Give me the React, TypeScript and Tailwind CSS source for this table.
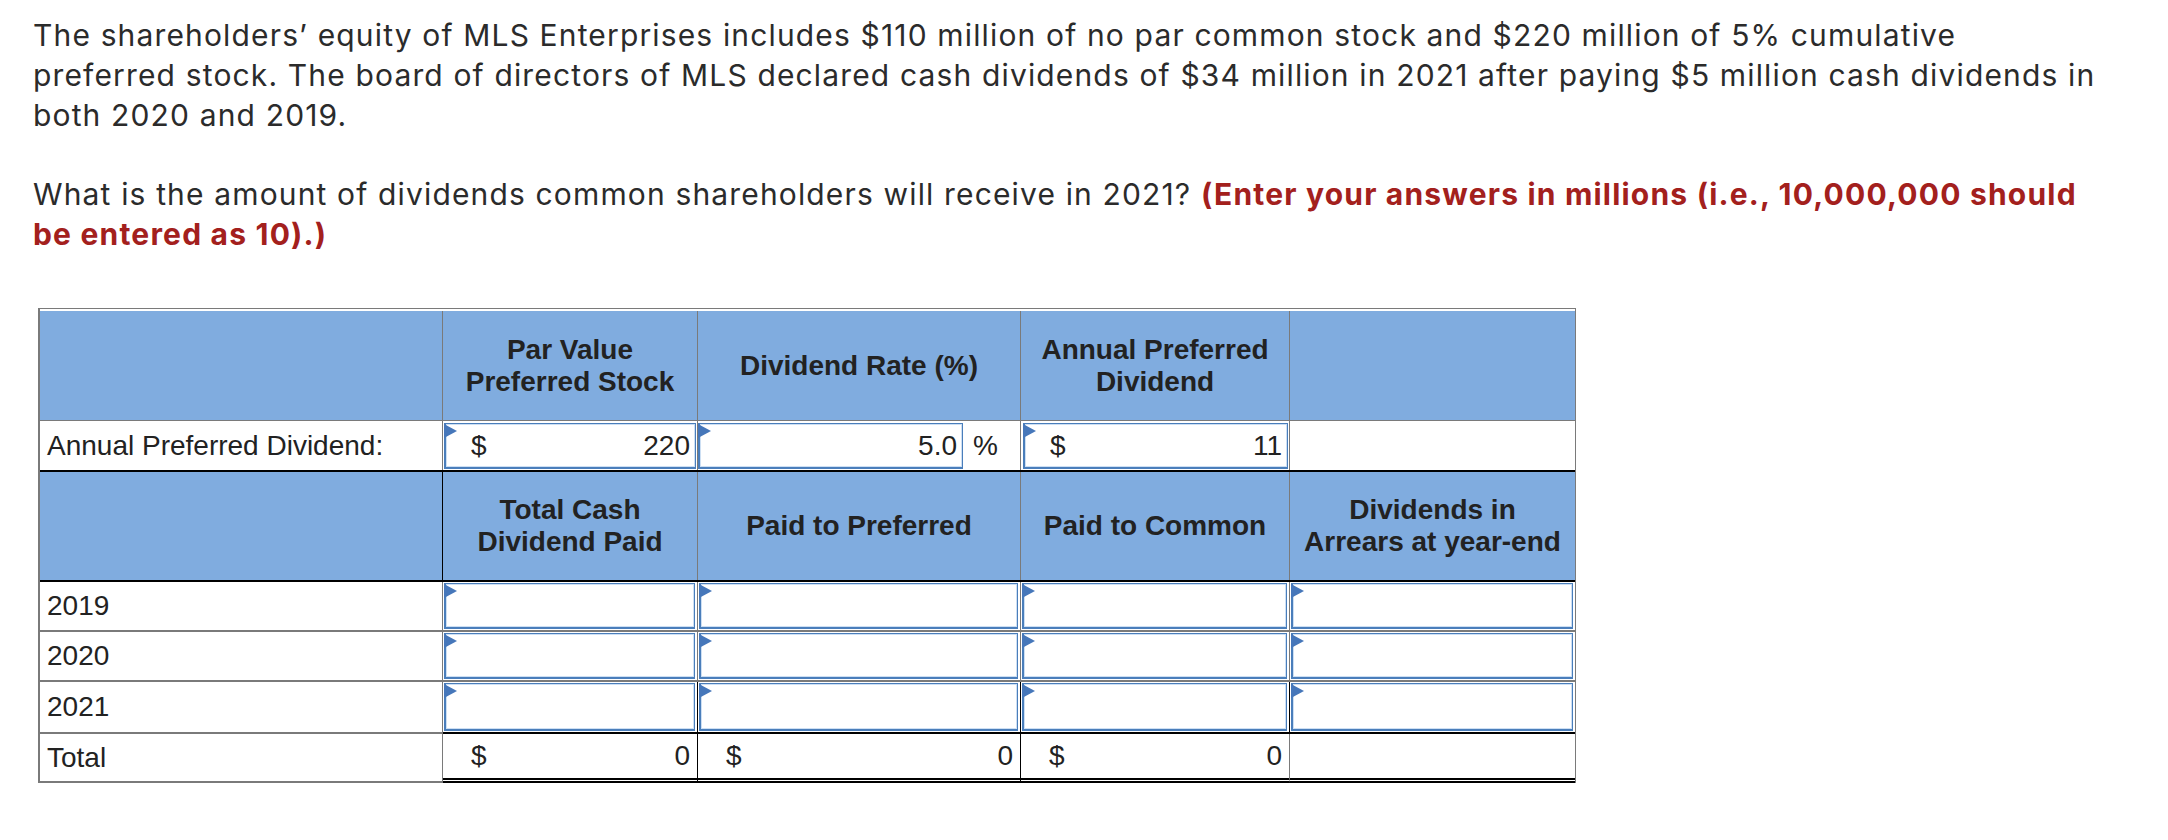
import type { ReactNode } from "react";

const gray = "border-[#7a7a7a]";

function Flag() {
  return (
    <svg
      className="absolute left-[-2px] top-0"
      width="13"
      height="14"
      viewBox="0 0 13 14"
    >
      <polygon points="0,0 13,7 0,14" fill="#4677ba" />
    </svg>
  );
}

// editable answer box with the little blue flag in the corner
function InputBox({
  left,
  right,
  className = "",
}: {
  left?: ReactNode;
  right?: ReactNode;
  className?: string;
}) {
  return (
    <div
      className={`relative flex h-full items-center justify-between border border-b-2 border-l-2 border-[#4a7ebb] bg-white pl-[25px] pr-[5px] shadow-[inset_0_0_0_1px_#cddff3] ${className}`}
    >
      <Flag />
      <span>{left}</span>
      <span>{right}</span>
    </div>
  );
}

function HeadCell({
  children,
  className = "",
}: {
  children?: ReactNode;
  className?: string;
}) {
  return (
    <div
      className={`flex items-center justify-center bg-[#80acdf] px-2 text-center font-bold leading-[32px] ${className}`}
    >
      <div>{children}</div>
    </div>
  );
}

export default function App() {
  const years = ["2019", "2020", "2021"];

  return (
    <div className="min-h-[840px] w-[2168px] bg-white text-[#222]">
      <div className="px-[33px] pt-[15px] font-['Inter',sans-serif] text-[30px] leading-[40px] tracking-[1.15px] text-[#2b2b2b]">
        <p className="w-[2110px]">
          The shareholders’ equity of MLS Enterprises includes $110 million of
          no par common stock and $220 million of 5% cumulative
          <br />
          preferred stock. The board of directors of MLS declared cash
          dividends of $34 million in 2021 after paying $5 million cash
          dividends in
          <br />
          both 2020 and 2019.
        </p>
        <p className="mt-[39px] w-[2110px]">
          What is the amount of dividends common shareholders will receive in
          2021?{" "}
          <strong className="font-bold tracking-[1.2px] text-[#a3201d]">
            (Enter your answers in millions (i.e., 10,000,000 should
            <br />
            be entered as 10).)
          </strong>
        </p>
      </div>

      <div
        className={`ml-[38px] mt-[54px] w-[1538px] border-l-2 border-r border-t ${gray} pt-[2px] font-['Liberation_Sans',Arial,sans-serif] text-[28px] leading-[32px]`}
      >
        {/* first header */}
        <div className="grid h-[110px] grid-cols-[403px_255px_323px_269px_285px]">
          <HeadCell className={`border-b border-r ${gray}`} />
          <HeadCell className={`border-b border-r ${gray}`}>
            Par Value
            <br />
            Preferred Stock
          </HeadCell>
          <HeadCell className={`border-b border-r ${gray}`}>
            Dividend Rate (%)
          </HeadCell>
          <HeadCell className={`border-b border-r ${gray}`}>
            Annual Preferred
            <br />
            Dividend
          </HeadCell>
          <HeadCell className={`border-b ${gray}`} />
        </div>

        {/* annual preferred dividend row */}
        <div className="grid h-[51px] grid-cols-[403px_255px_323px_269px_285px] border-b-2 border-black">
          <div className={`flex items-center border-r ${gray} pl-[7px]`}>
            Annual Preferred Dividend:
          </div>
          <div className={`border-r ${gray} pb-[1px] pl-[1px] pr-[1px] pt-[2px]`}>
            <InputBox left="$" right="220" />
          </div>
          <div className={`flex border-r ${gray} pb-[1px] pt-[2px]`}>
            <InputBox right="5.0" className="w-[265px]" />
            <span className="ml-[10px] self-center">%</span>
          </div>
          <div className={`border-r ${gray} pb-[1px] pl-[2px] pr-[1px] pt-[2px]`}>
            <InputBox left="$" right="11" />
          </div>
          <div />
        </div>

        {/* second header */}
        <div className="grid h-[110px] grid-cols-[403px_255px_323px_269px_285px] border-b-2 border-black">
          <HeadCell className="border-r border-black" />
          <HeadCell className={`border-r ${gray}`}>
            Total Cash
            <br />
            Dividend Paid
          </HeadCell>
          <HeadCell className={`border-r ${gray}`}>Paid to Preferred</HeadCell>
          <HeadCell className={`border-r ${gray}`}>Paid to Common</HeadCell>
          <HeadCell className="px-0">
            Dividends in
            <br />
            Arrears at year-end
          </HeadCell>
        </div>

        {/* yearly rows */}
        {years.map((year, i) => {
          const last = i === years.length - 1;
          const under = last ? "border-black" : gray;
          return (
            <div
              key={year}
              className={`grid grid-cols-[403px_255px_323px_269px_285px] ${
                last ? "h-[52px]" : "h-[50px]"
              }`}
            >
              <div
                className={`flex items-center border-b-2 border-r ${gray} pl-[7px]`}
              >
                {year}
              </div>
              {[0, 1, 2, 3].map((c) => (
                <div
                  key={c}
                  className={`border-b-2 ${under} ${
                    c < 3 ? `border-r ${gray}` : ""
                  } p-[1px] pr-[2px]`}
                >
                  <InputBox />
                </div>
              ))}
            </div>
          );
        })}

        {/* totals */}
        <div className="grid h-[49px] grid-cols-[403px_255px_323px_269px_285px]">
          <div className={`flex items-center border-b-2 border-r ${gray} pl-[7px]`}>
            Total
          </div>
          <div className="flex items-center justify-between border-b-[5px] border-r border-double border-b-black border-r-black pl-[28px] pr-[7px]">
            <span>$</span>
            <span>0</span>
          </div>
          <div className="flex items-center justify-between border-b-[5px] border-r border-double border-b-black border-r-black pl-[28px] pr-[7px]">
            <span>$</span>
            <span>0</span>
          </div>
          <div className="flex items-center justify-between border-b-[5px] border-r border-double border-b-black border-r-[#7a7a7a] pl-[28px] pr-[7px]">
            <span>$</span>
            <span>0</span>
          </div>
          <div className="border-b-[5px] border-double border-black" />
        </div>
      </div>
    </div>
  );
}
